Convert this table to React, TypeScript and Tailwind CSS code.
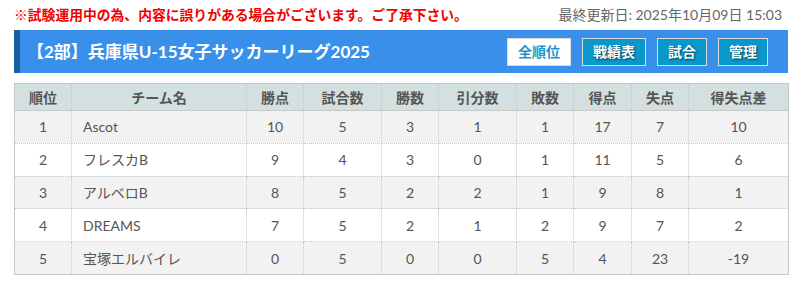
import React from "react";

const FONT = "font-['Lato','Noto_Sans_CJK_JP',sans-serif]";

const columns = [
  { label: "順位", width: 57 },
  { label: "チーム名", width: 175 },
  { label: "勝点", width: 57 },
  { label: "試合数", width: 78 },
  { label: "勝数", width: 57 },
  { label: "引分数", width: 78 },
  { label: "敗数", width: 57 },
  { label: "得点", width: 58 },
  { label: "失点", width: 57 },
  { label: "得失点差", width: 100 },
];

const rows = [
  { rank: 1, team: "Ascot", pts: 10, played: 5, won: 3, drawn: 1, lost: 1, gf: 17, ga: 7, gd: "10" },
  { rank: 2, team: "フレスカB", pts: 9, played: 4, won: 3, drawn: 0, lost: 1, gf: 11, ga: 5, gd: "6" },
  { rank: 3, team: "アルベロB", pts: 8, played: 5, won: 2, drawn: 2, lost: 1, gf: 9, ga: 8, gd: "1" },
  { rank: 4, team: "DREAMS", pts: 7, played: 5, won: 2, drawn: 1, lost: 2, gf: 9, ga: 7, gd: "2" },
  { rank: 5, team: "宝塚エルバイレ", pts: 0, played: 5, won: 0, drawn: 0, lost: 5, gf: 4, ga: 23, gd: "-19" },
];

const navButtons = [
  { label: "全順位", active: true },
  { label: "戦績表", active: false },
  { label: "試合", active: false },
  { label: "管理", active: false },
];

export default function App() {
  return (
    <div className={`w-[801px] h-[289px] bg-white pl-[14px] pr-[13px] ${FONT}`}>
      {/* Notice + last update */}
      <div className="flex items-center justify-between h-[30px] pb-[1px] pr-[6px]">
        <p className="text-[13.8px] font-bold text-[#f00000] leading-none">
          ※試験運用中の為、内容に誤りがある場合がございます。ご了承下さい。
        </p>
        <p className="text-[14px] text-[#666] leading-none">最終更新日: 2025年10月09日 15:03</p>
      </div>

      {/* Title bar */}
      <div className="flex items-center justify-between h-[43px] bg-[#3990ea] border-l-[6px] border-[#1a5ea6] pl-[7px] pr-[20px]">
        <h1 className="text-[17px] font-bold text-white leading-none">【2部】兵庫県U-15女子サッカーリーグ2025</h1>
        <nav className="flex items-center gap-[11px]">
          {navButtons.map((b) => (
            <button
              key={b.label}
              className={`h-[28px] px-[10px] border border-[#dcdcdc] text-[14px] font-bold leading-none ${
                b.active
                  ? "bg-white text-[#1b96cb]"
                  : "bg-[#0a97c9] text-white [text-shadow:1px_1px_2px_rgba(0,0,0,0.6)]"
              }`}
            >
              {b.label}
            </button>
          ))}
        </nav>
      </div>

      {/* Standings */}
      <table className="mt-[10px] w-[774px] table-fixed border-collapse border border-[#c8c8c8] text-[14px] text-[#555]">
        <colgroup>
          {columns.map((c) => (
            <col key={c.label} style={{ width: c.width }} />
          ))}
        </colgroup>
        <thead>
          <tr className="h-[27px] bg-[#d4e0e0]">
            {columns.map((c) => (
              <th
                key={c.label}
                className="border-x border-b border-dotted border-[#c8c8c8] font-bold text-[#555] text-center p-0"
                style={{ borderBottomStyle: "solid" }}
              >
                {c.label}
              </th>
            ))}
          </tr>
        </thead>
        <tbody>
          {rows.map((r, i) => {
            const cells = [r.pts, r.played, r.won, r.drawn, r.lost, r.gf, r.ga, r.gd];
            return (
              <tr key={r.rank} className={`h-[32.8px] ${i % 2 === 0 ? "bg-[#f2f2f2]" : "bg-white"}`}>
                <td className="border border-dotted border-[#c8c8c8] text-center p-0">{r.rank}</td>
                <td className="border border-dotted border-[#c8c8c8] text-left pl-[11px] p-0">{r.team}</td>
                {cells.map((v, j) => (
                  <td key={j} className="border border-dotted border-[#c8c8c8] text-center p-0">
                    {v}
                  </td>
                ))}
              </tr>
            );
          })}
        </tbody>
      </table>
    </div>
  );
}
